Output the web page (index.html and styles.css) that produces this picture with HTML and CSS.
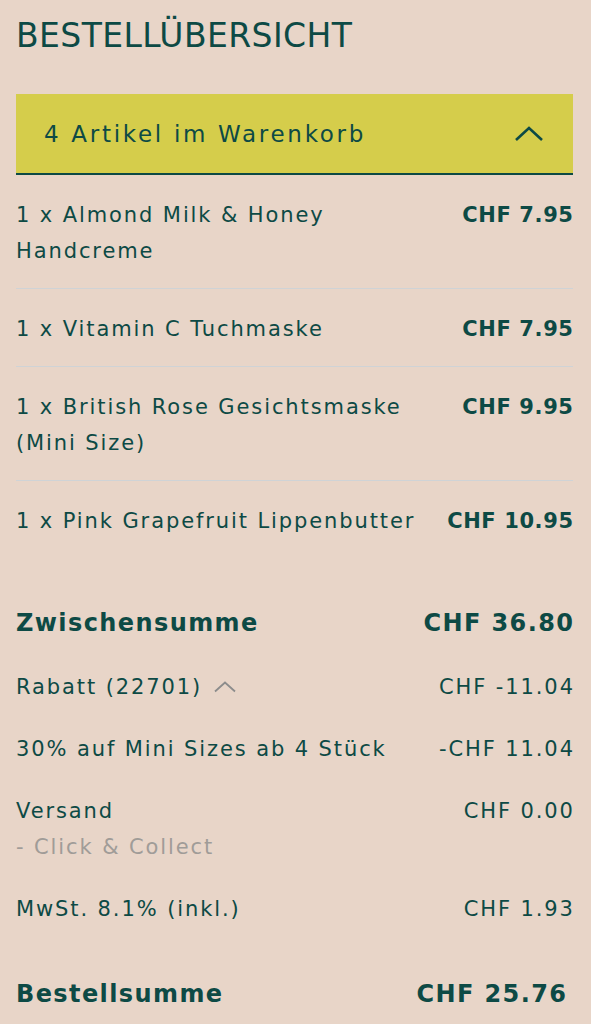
FILE: index.html
```html
<!DOCTYPE html>
<html lang="de">
<head>
<meta charset="utf-8">
<link rel="stylesheet" href="styles.css">
</head>
<body>
<div class="page">
  <h1 class="title">BESTELLÜBERSICHT</h1>
  <div class="cart-bar">
    <span>4 Artikel im Warenkorb</span>
    <svg class="chev" width="30" height="16" viewBox="0 0 30 16"><path d="M2 14 L15 2 L28 14" fill="none" stroke="#0d4a45" stroke-width="2.6"/></svg>
  </div>
  <ul class="items">
    <li class="item"><span class="name">1 x Almond Milk &amp; Honey Handcreme</span><span class="price">CHF 7.95</span></li>
    <li class="item"><span class="name">1 x Vitamin C Tuchmaske</span><span class="price">CHF 7.95</span></li>
    <li class="item"><span class="name">1 x British Rose Gesichtsmaske (Mini Size)</span><span class="price">CHF 9.95</span></li>
    <li class="item"><span class="name">1 x Pink Grapefruit Lippenbutter</span><span class="price">CHF 10.95</span></li>
  </ul>
  <div class="summary">
    <div class="row strong"><span>Zwischensumme</span><span>CHF 36.80</span></div>
    <div class="row"><span class="rabatt">Rabatt (22701)<svg class="chev-s" width="22" height="12" viewBox="0 0 22 12"><path d="M1 10.5 L11 1.5 L21 10.5" fill="none" stroke="#8c8c8c" stroke-width="1.8"/></svg></span><span>CHF -11.04</span></div>
    <div class="row"><span>30% auf Mini Sizes ab 4 Stück</span><span>-CHF 11.04</span></div>
    <div class="row"><span class="stack"><span>Versand</span><span class="muted">- Click &amp; Collect</span></span><span>CHF 0.00</span></div>
    <div class="row"><span>MwSt. 8.1% (inkl.)</span><span>CHF 1.93</span></div>
    <div class="row strong total"><span>Bestellsumme</span><span>CHF 25.76</span></div>
  </div>
</div>
</body>
</html>
```

FILE: styles.css
```css
html, body {
  margin: 0;
  padding: 0;
  background: #e8d5c8;
}
body {
  font-family: "DejaVu Sans", "Open Sans", sans-serif;
  color: #0d4a45;
}
.page {
  padding: 0 18px 0 16px;
}
.title {
  margin: 0;
  height: 94px;
  padding-top: 12px;
  box-sizing: border-box;
  font-size: 33px;
  line-height: 48px;
  font-weight: 400;
  letter-spacing: 0.4px;
}
.cart-bar {
  height: 79px;
  background: #d5cd4b;
  border-bottom: 2px solid #0d4a45;
  display: flex;
  align-items: center;
  justify-content: space-between;
  padding: 0 29px 0 28px;
  font-size: 23px;
  letter-spacing: 2.7px;
}
.items {
  list-style: none;
  margin: 0;
  padding: 0;
}
.item {
  display: flex;
  justify-content: space-between;
  gap: 24px;
  padding: 22px 0 19px;
  line-height: 36px;
  font-size: 21px;
  letter-spacing: 1.9px;
  border-bottom: 1px solid #cfd3d6;
}
.item:last-child {
  border-bottom: none;
}
.price {
  font-weight: 700;
  white-space: nowrap;
  letter-spacing: 0.6px;
  margin-right: -0.6px;
}
.summary {
  margin-top: 45px;
  display: flex;
  flex-direction: column;
  gap: 26px;
  font-size: 21px;
  line-height: 36px;
  letter-spacing: 1.9px;
}
.row {
  display: flex;
  justify-content: space-between;
  margin-right: -1.9px;
}
.row.strong {
  font-size: 24px;
  font-weight: 700;
  line-height: 40px;
  letter-spacing: 1.4px;
  margin-right: -1.4px;
}
.row.total {
  margin-top: 21px;
  padding-right: 7px;
}
.rabatt {
  display: flex;
  align-items: center;
  gap: 12px;
}
.stack {
  display: flex;
  flex-direction: column;
}
.muted {
  color: #a09c98;
}
```
